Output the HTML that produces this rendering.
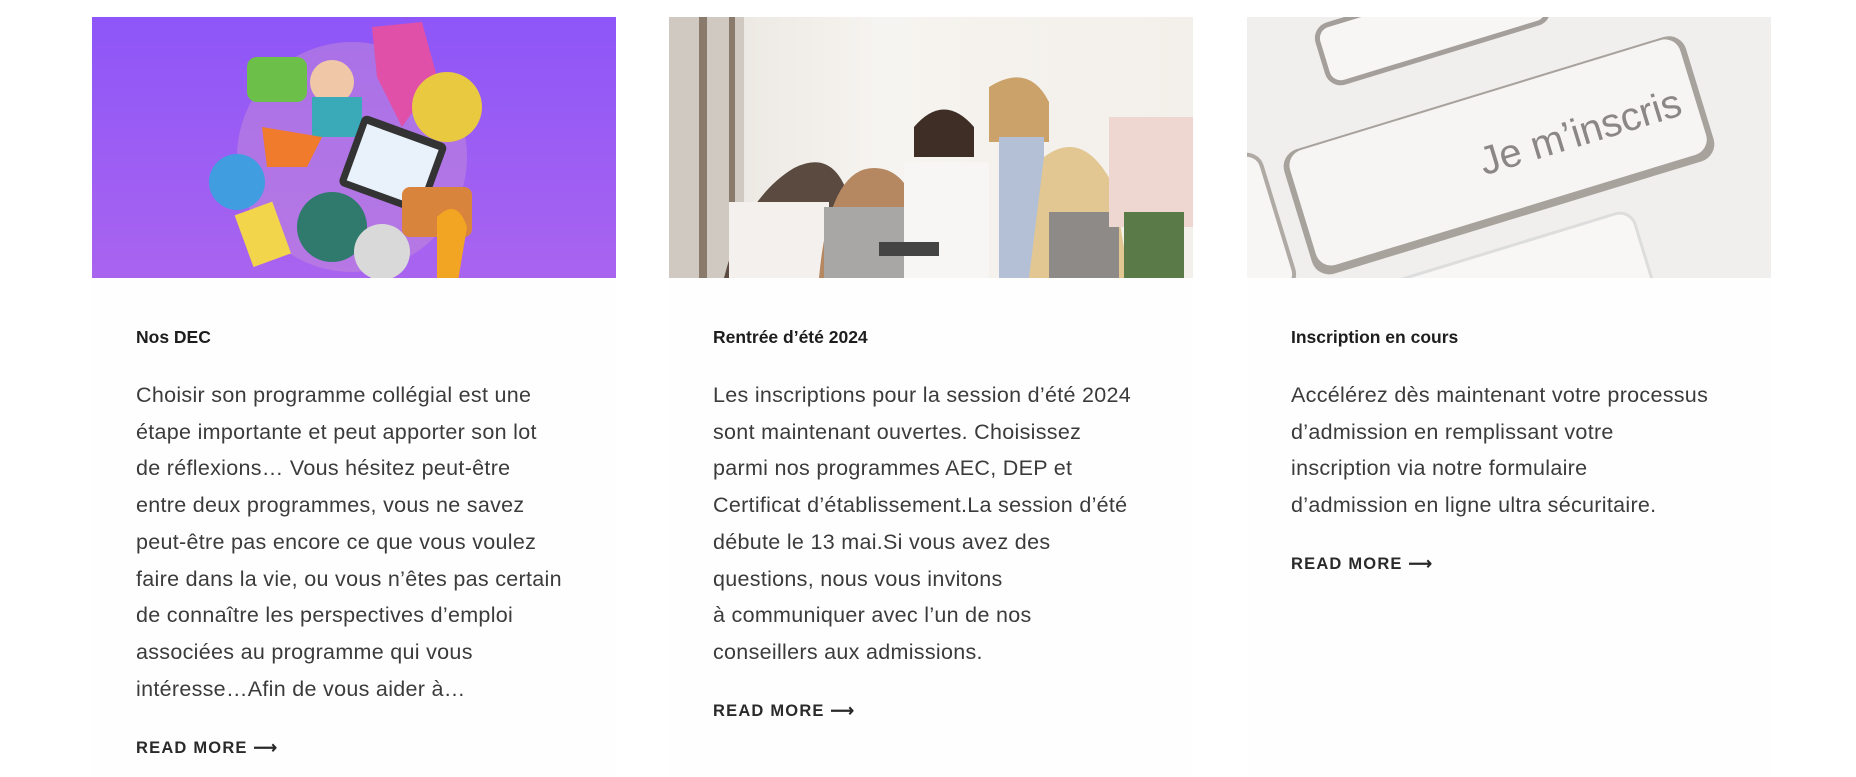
<!DOCTYPE html>
<html><head><meta charset="utf-8"><style>
*{margin:0;padding:0;box-sizing:border-box}
body{width:1856px;height:765px;background:#fff;font-family:"Liberation Sans",sans-serif;overflow:hidden;position:relative}
.card{position:absolute;top:17px;width:524px;height:760px;background:#fefefe}
.img{position:absolute;left:0;top:0;width:524px;height:261px;overflow:hidden}
.t{position:absolute;left:44px;top:310px;font-size:17.5px;font-weight:bold;color:#1d1d1d;white-space:nowrap}
.b{position:absolute;left:44px;top:360px;font-size:21.5px;letter-spacing:0.3px;line-height:36.7px;color:#3b3b3b;white-space:nowrap}
.r{position:absolute;left:44px;font-size:16.5px;font-weight:bold;letter-spacing:1.2px;color:#2a2a2a;white-space:nowrap}
</style></head><body>

<div class="card" style="left:92px">
 <div class="img" style="background:linear-gradient(#8e56f8,#a964ef)">
  <svg width="524" height="261">
   <circle cx="260" cy="140" r="115" fill="#c38bd8" opacity=".5"/>
   <rect x="155" y="40" width="60" height="45" rx="10" fill="#6cc04a"/>
   <circle cx="240" cy="65" r="22" fill="#f0c8a8"/>
   <rect x="220" y="80" width="50" height="40" fill="#3aa9b8"/>
   <path d="M280 10 L330 5 L345 60 L310 110 L285 60Z" fill="#e04fa8"/>
   <circle cx="355" cy="90" r="35" fill="#e8c940"/>
   <rect x="255" y="110" width="90" height="75" rx="6" fill="#333" transform="rotate(20 300 150)"/>
   <rect x="262" y="118" width="76" height="60" fill="#e9f1fb" transform="rotate(20 300 150)"/>
   <circle cx="145" cy="165" r="28" fill="#3f9de0"/>
   <path d="M170 110 L230 120 L215 150 L175 150Z" fill="#f07b2c"/>
   <rect x="310" y="170" width="70" height="50" rx="8" fill="#d9843c"/>
   <rect x="150" y="190" width="40" height="55" fill="#f2d54a" transform="rotate(-20 170 215)"/>
   <circle cx="240" cy="210" r="35" fill="#2f7a6c"/>
   <circle cx="290" cy="235" r="28" fill="#d9d9d9"/>
   <path d="M345 200 q20 -20 30 10 l-10 60 h-20z" fill="#f2a523"/>
  </svg>
 </div>
 <div class="t">Nos DEC</div>
 <div class="b">Choisir son programme collégial est une<br>étape importante et peut apporter son lot<br>de réflexions… Vous hésitez peut-être<br>entre deux programmes, vous ne savez<br>peut-être pas encore ce que vous voulez<br>faire dans la vie, ou vous n’êtes pas certain<br>de connaître les perspectives d’emploi<br>associées au programme qui vous<br>intéresse…Afin de vous aider à…</div>
 <div class="r" style="top:721px">READ MORE ⟶</div>
</div>

<div class="card" style="left:669px">
 <div class="img" style="background:linear-gradient(90deg,#e8e2dc,#f6f4f0 40%,#f3efea)">
  <svg width="524" height="261">
   <rect x="0" y="0" width="75" height="261" fill="#cfc9c2"/>
   <rect x="30" y="0" width="8" height="261" fill="#8a7a6c"/>
   <rect x="60" y="0" width="6" height="261" fill="#8a7a6c"/>
   <path d="M55 261 q20-80 70-110 q40-20 55 30 l20 80z" fill="#5a4a40"/>
   <rect x="60" y="185" width="100" height="76" fill="#f4f0ee"/>
   <path d="M150 261 q10-110 55-110 q45 0 50 90 v20z" fill="#b58862"/>
   <rect x="155" y="190" width="80" height="71" fill="#a9a7a6"/>
   <path d="M245 110 q30-35 60 0 v30 h-60z" fill="#3e2e26"/>
   <rect x="235" y="145" width="85" height="116" fill="#f8f6f4"/>
   <path d="M320 70 q40-25 60 15 v40 h-60z" fill="#caa26a"/>
   <rect x="330" y="120" width="45" height="141" fill="#b3c0d6"/>
   <path d="M375 140 q40-30 70 30 l15 91 h-100z" fill="#e2c792"/>
   <rect x="380" y="195" width="70" height="66" fill="#8d8a88"/>
   <rect x="440" y="100" width="84" height="110" fill="#eed7d0"/>
   <rect x="455" y="195" width="60" height="66" fill="#5a7a48"/>
   <rect x="210" y="225" width="60" height="14" fill="#444"/>
  </svg>
 </div>
 <div class="t">Rentrée d’été 2024</div>
 <div class="b">Les inscriptions pour la session d’été 2024<br>sont maintenant ouvertes. Choisissez<br>parmi nos programmes AEC, DEP et<br>Certificat d’établissement.La session d’été<br>débute le 13 mai.Si vous avez des<br>questions, nous vous invitons<br>à communiquer avec l’un de nos<br>conseillers aux admissions.</div>
 <div class="r" style="top:684px">READ MORE ⟶</div>
</div>

<div class="card" style="left:1247px">
 <div class="img" style="background:#f0efee">
  <svg width="524" height="261">
   <g transform="rotate(-17 262 130)">
    <rect x="110" y="-40" width="230" height="60" rx="14" fill="#f7f6f5" stroke="#a49f9a" stroke-width="5"/>
    <rect x="40" y="70" width="420" height="130" rx="18" fill="#a8a29c"/>
    <rect x="46" y="72" width="408" height="120" rx="16" fill="#f6f5f4"/>
    <text x="230" y="150" font-family="Liberation Sans" font-size="40" fill="#8a8785">Je m’inscris</text>
    <rect x="-120" y="60" width="140" height="140" rx="16" fill="#f7f6f5" stroke="#b0aaa5" stroke-width="4"/>
    <rect x="60" y="225" width="300" height="100" rx="16" fill="#f8f7f6" stroke="#ddd" stroke-width="3"/>
   </g>
  </svg>
 </div>
 <div class="t">Inscription en cours</div>
 <div class="b">Accélérez dès maintenant votre processus<br>d’admission en remplissant votre<br>inscription via notre formulaire<br>d’admission en ligne ultra sécuritaire.</div>
 <div class="r" style="top:537px">READ MORE ⟶</div>
</div>

</body></html>
